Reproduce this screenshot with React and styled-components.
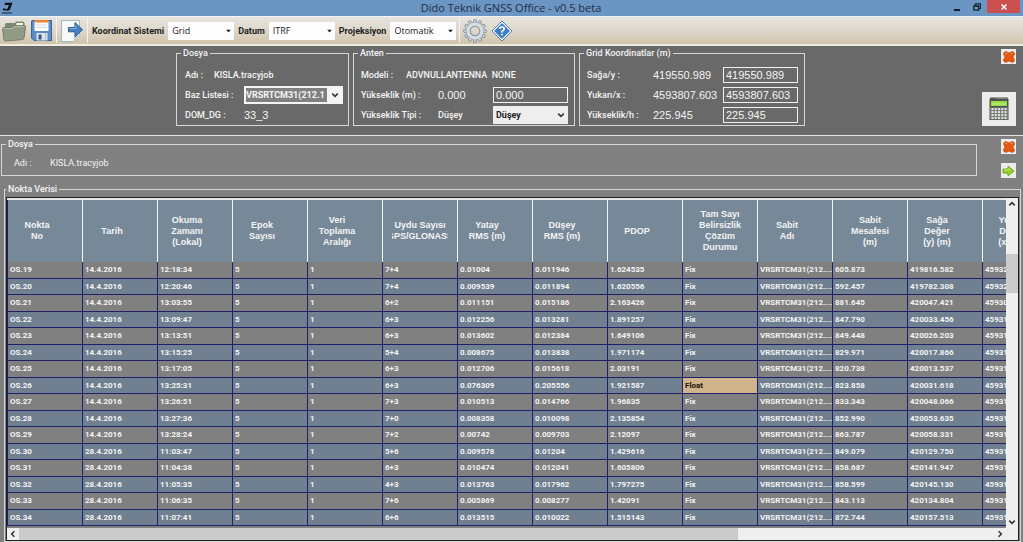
import React from "react";
import styled, { createGlobalStyle } from "styled-components";

const GlobalStyle = createGlobalStyle`
  *, *::before, *::after { box-sizing: border-box; }
  body { margin: 0; font-family: Roboto, "Liberation Sans", sans-serif; font-size: 9px; font-weight: 500; color: #f4f4f4; background: #808080; }
  button, input, select { font: inherit; color: inherit; margin: 0; padding: 0; border-radius: 0; }
  svg { display: block; }
`;

const Window = styled.div`
  display: flex;
  flex-direction: column;
  height: 100vh;
  min-height: 320px;
  overflow: hidden;
`;

const TitleBar = styled.header`
  flex: none;
  display: grid;
  grid-template-columns: 1fr auto 1fr;
  align-items: center;
  height: 16px;
  padding: 0 3px 0 2px;
  background: #6b95c3;
`;

const Title = styled.h1`
  margin: 0;
  font: 400 11px/16px "Open Sans", "Noto Sans", sans-serif;
  color: #1d2f47;
`;

const WindowButtons = styled.div`
  display: flex;
  justify-content: flex-end;
  align-items: flex-start;
  height: 16px;
`;

const WindowButton = styled.button`
  display: grid;
  place-items: center;
  width: ${(p) => (p.$close ? 33 : 20)}px;
  height: 13px;
  border: 0;
  background: ${(p) => (p.$close ? "#c9504f" : "transparent")};
`;

const Toolbar = styled.div`
  flex: none;
  display: flex;
  align-items: center;
  height: 30px;
  padding: 0 2px;
  gap: 3px;
  border-top: 1px solid #f0f4f6;
  border-bottom: 2px solid #efece4;
  background: linear-gradient(#e7e4de, #e0dacf 40%, #d1c4ac);
  color: #222;
`;

const ToolButton = styled.button`
  display: grid;
  place-items: center;
  width: 24px;
  height: 24px;
  border: 0;
  background: transparent;
`;

const Separator = styled.span`
  width: 1px;
  height: 25px;
  background: #f6f3ee;
`;

const ToolLabel = styled.label`
  display: flex;
  align-items: center;
  gap: 4px;
  margin-left: 1px;
  font-weight: 700;
  white-space: nowrap;
`;

const Combo = styled.span`
  position: relative;
  display: block;
  width: ${(p) => p.$width}px;
  color: #222;
  & > svg { position: absolute; right: ${(p) => p.$inset || 3}px; top: 50%; transform: translateY(-50%); pointer-events: none; }
`;

const ToolSelect = styled.select`
  appearance: none;
  display: block;
  width: 100%;
  height: 18px;
  padding-left: 4px;
  border: 0;
  background: #fdfdfd;
  font: 400 9px/18px "Open Sans", sans-serif;
`;

const FormSelect = styled.select`
  appearance: none;
  display: block;
  width: 100%;
  height: 18px;
  padding-left: 3px;
  border: 0;
  background: #eeeeee;
  font-weight: 700;
`;

const HighlightSelect = styled(FormSelect)`
  padding: 0;
  border: 2px solid #f4f4f4;
  border-right-width: 16px;
  background: #808080;
  color: #f4f4f4;
`;

const Panel = styled.section`
  flex: none;
  display: flex;
  background: ${(p) => (p.$dark ? "#696969" : "#808080")};
  height: ${(p) => p.$height}px;
  border-bottom: ${(p) => (p.$dark ? "1px solid #e4e4e4" : "0")};
`;

const Groups = styled.div`
  flex: 1;
  display: flex;
  justify-content: center;
  align-items: flex-start;
  gap: 4px;
  padding: ${(p) => p.$pad};
`;

const Group = styled.fieldset`
  min-width: 0;
  margin: 0;
  padding: 0 4px;
  border: 1px solid #d6d6d6;
  ${(p) => (p.$width ? `width: ${p.$width}px;` : "flex: 1;")}
`;

const GroupBody = styled.div`
  padding: ${(p) => p.$pad || "7px 2px 1px 3px"};
  font-weight: ${(p) => (p.$light ? 400 : 500)};
`;

const Legend = styled.legend`
  padding: 0 2px;
  line-height: 12px;
`;

const Line = styled.div`
  display: flex;
  align-items: center;
  height: 18px;
  margin-bottom: ${(p) => (p.$last ? 0 : 2)}px;
  white-space: pre;
`;

const Caption = styled.label`
  flex: none;
  width: ${(p) => p.$width}px;
`;

const Value = styled.output`
  flex: 1;
  ${(p) => p.$number && 'font: 400 11px/18px "Liberation Sans", sans-serif;'}
`;

const TextBox = styled.input`
  width: 75px;
  height: 16px;
  padding: 0 2px;
  border: 1px solid #f0f0f0;
  outline: 0;
  background: transparent;
  font: 400 11px/14px "Liberation Sans", sans-serif;
`;

const SideButtons = styled.div`
  flex: none;
  display: flex;
  flex-direction: column;
  align-items: flex-end;
  justify-content: space-between;
  width: 42px;
  padding: ${(p) => p.$pad};
`;

const SideButton = styled.button`
  display: grid;
  place-items: center;
  width: ${(p) => p.$size}px;
  height: ${(p) => p.$size}px;
  border: 0;
  background: #ececec;
`;

const DataGroup = styled.fieldset`
  flex: 1;
  display: flex;
  min-width: 0;
  min-height: 0;
  margin: 0 2px 0 4px;
  padding: 2px 1px 0;
  border: 1px solid #d6d6d6;
`;

const GridFrame = styled.div`
  flex: 1;
  display: grid;
  grid-template-columns: minmax(0, 1fr) 12px;
  grid-template-rows: minmax(0, 1fr) 12px;
  min-width: 0;
  min-height: 0;
  border: 1px solid #222;
  background: #efefef;
`;

const Viewport = styled.div`
  overflow: hidden;
  border-top: 2px solid #e4e8ec;
  background: #808080;
`;

const DataTable = styled.table`
  width: 1051px;
  table-layout: fixed;
  border-spacing: 0;
  border-left: 1px solid #1c1c60;
  font: 700 8px/12px Roboto, "Liberation Sans", sans-serif;
`;

const HeadCell = styled.th`
  height: 62px;
  padding: ${(p) => (p.$wide ? "0 9px" : "0 16px 0 0")};
  border-right: 1px solid #f2f2f2;
  background: #778899;
  font: 700 9px/11px "Liberation Sans", sans-serif;
  white-space: pre;
  vertical-align: middle;
`;

const HeadText = styled.span`
  display: flex;
  justify-content: center;
  overflow: hidden;
`;

const Row = styled.tr`
  height: 17px;
  background: #808080;
  &:nth-child(even) { height: 16px; background: #708090; }
`;

const Cell = styled.td`
  overflow: hidden;
  padding: 0 0 0 2px;
  border-right: 1px solid #1f1f6b;
  border-bottom: 1px solid #1f1f6b;
  white-space: nowrap;
  ${(p) => p.$float && "background: #d2b48c; color: #1a1008;"}
`;

const ScrollBar = styled.div`
  display: flex;
  flex-direction: ${(p) => (p.$vertical ? "column" : "row")};
  min-width: 0;
  min-height: 0;
  ${(p) => !p.$vertical && "grid-column: 1 / 3;"}
`;

const ScrollButton = styled.button`
  flex: none;
  display: grid;
  place-items: center;
  width: 12px;
  height: 12px;
  border: 0;
  background: #efefef;
`;

const Track = styled.div`
  flex: 1;
  display: flex;
  flex-direction: inherit;
`;

const Space = styled.span`
  flex: ${(p) => p.$grow};
`;

const Thumb = styled.span`
  flex: ${(p) => p.$grow};
  background: #cbcbcb;
`;

const Chevron = ({ turn = 0, color = "#333", size = 8 }) => (
  <svg width={size} height={size} viewBox="0 0 8 8">
    <path d="M1.2 2.6 4 5.4 6.8 2.6" fill="none" stroke={color} strokeWidth="1.5" transform={`rotate(${turn} 4 4)`} />
  </svg>
);

const Triangle = () => (
  <svg width="5" height="3" viewBox="0 0 5 3"><path d="M0 0h5L2.5 3z" fill="#222" /></svg>
);

const AppLogo = () => (
  <svg width="12" height="12" viewBox="0 0 12 12">
    <path d="M3 .8h7.5L8 7.6Q7 9 5 8.6L1 8.2V6l3 1.2 1.6-.6L7 3H2.5z" fill="#0d1118" />
    <path d="M0 10.5h10v1H0z" fill="#18222f" />
  </svg>
);

const FolderIcon = () => (
  <svg width="24" height="22" viewBox="0 0 24 22">
    <path d="M2 18 3 4.5Q3 3 4.5 3H13l1-1.5h7.5l1 1.5v13z" fill="#7d8873" />
    <path d="M14.5 3H21v3h-7z" fill="#f3f3ec" />
    <path d="M0.6 9Q.5 7.5 2 7.500h7l3-2h10.500Q24 5.500 23.700 7L22 18q-.3 1.500-2 1.700L3.500 21Q2 21 1.800 19.500z" fill="#909b84" stroke="#69745f" strokeWidth=".8" />
    <path d="M1.500 8.600h8l3-2h10" stroke="#b6bea9" fill="none" />
  </svg>
);

const SaveIcon = () => (
  <svg width="21" height="21" viewBox="0 0 21 21">
    <path d="M1 .5h19.500v20H3L.5 18V1z" fill="#5b8bc4" stroke="#36649c" />
    <path d="M3.500 1h14v10h-14z" fill="#fbfbfb" />
    <path d="M3.500 0h14v2.500h-14z" fill="#ed8434" />
    <path d="M5 5h11M5 7.500h11" stroke="#d5d9df" />
    <path d="M5.500 13h11v7.500h-11z" fill="#dce4ec" />
    <path d="M7.500 14.500h3v5h-3z" fill="#35587f" />
    <path d="M14.500 13.500v6" stroke="#aebdca" />
  </svg>
);

const ExportIcon = () => (
  <svg width="24" height="24" viewBox="0 0 24 24">
    <path d="M1.500 1.500h18v14l-6 7h-12z" fill="#f8f9fb" stroke="#aab4bf" />
    <path d="m13.500 22.500.5-6 5.500-1z" fill="#cbd1d8" />
    <path d="M8.500 8.500h6.500v-5l7.500 7.300-7.500 7v-5H8.500z" fill="#447fbd" stroke="#295c95" />
    <path d="M9.500 9.500h6.500v-3" stroke="#8db7df" fill="none" />
  </svg>
);

const GearIcon = () => (
  <svg width="24" height="24" viewBox="-12 -12 24 24">
    {Array.from({ length: 12 }, (_, i) => (
      <path key={i} d="M-1.700-8-1.200-11.300h2.400L1.700-8z" fill="#d4dde2" stroke="#78878f" strokeWidth=".8" transform={`rotate(${i * 30})`} />
    ))}
    <circle r="7" fill="none" stroke="#8997a0" strokeWidth="4.600" />
    <circle r="7" fill="none" stroke="#d4dde2" strokeWidth="3.400" />
    <circle r="4.600" fill="none" stroke="#8d9ba4" />
  </svg>
);

const HelpIcon = () => (
  <svg width="22" height="22" viewBox="0 0 22 22">
    <path d="M11 1 21 11 11 21 1 11z" fill="#fff" stroke="#4d7fb8" strokeWidth="1" strokeLinejoin="round" />
    <path d="M11 3 19 11 11 19 3 11z" fill="#3f7fc4" />
    <path d="M8.800 9Q8.800 7 11 7t2.200 1.800Q13.200 10 11 11.200V12.500M11 13.800v1.500" fill="none" stroke="#fff" strokeWidth="1.700" />
  </svg>
);

const CrossIcon = () => (
  <svg width="12" height="12" viewBox="0 0 12 12">
    <path d="M1 1.500Q2.500-.3 4.500 1.200L6 2 7.500 1.200Q9.500-.3 11 1.500T10.700 4.500L10 6l.7 1.500Q12 9 11 10.500T7.500 10.800L6 10l-1.500.8Q2.500 12 1 10.500T1.300 7.500L2 6 1.300 4.500Q0 3 1 1.500z" fill="#e4590f" stroke="#b8420b" strokeWidth=".7" />
    <path d="M2 2.500Q3 1.500 4.300 2.500M7.500 2.500Q9 1.500 10 2.500" fill="none" stroke="#fa9a52" />
  </svg>
);

const NextIcon = () => (
  <svg width="13" height="12" viewBox="0 0 13 12">
    <path d="M1 4h5V1l6 5-6 5V8H1z" fill="#96cf2b" stroke="#6ba316" strokeWidth=".9" strokeLinejoin="round" />
    <path d="M2 5h5V3.500" fill="none" stroke="#cdec7c" />
  </svg>
);

const CalculatorIcon = () => (
  <svg width="22" height="24" viewBox="0 0 22 24">
    <path d="M2.500.5h17l1 2V23h-19V2.500z" fill="#50534e" />
    <path d="M8 1.500h11" stroke="#7e827b" />
    <path d="M3 4h16v5H3z" fill="#96dc49" />
    <path d="M4 7h14" stroke="#c5f28e" />
    <path d="M2 10.500h18V22.500H2z" fill="#7c807b" />
    {[12, 15, 18, 21].map((y) => (
      <path key={y} d={`M3.500 ${y}h15`} stroke="#e1e4df" strokeWidth="1.800" strokeDasharray="2 1.250" />
    ))}
  </svg>
);

const headers = [
  ["Nokta", "No"], ["Tarih"], ["Okuma", "Zamanı", "(Lokal)"], ["Epok", "Sayısı"], ["Veri", "Toplama", "Aralığı"],
  ["Uydu Sayısı", "GPS/GLONASS"], ["Yatay", "RMS (m)"], ["Düşey", "RMS (m)"], ["PDOP"],
  ["Tam Sayı", "Belirsizlik", "Çözüm", "Durumu"], ["Sabit", "Adı"], ["Sabit", "Mesafesi", "(m)"],
  ["Sağa", "Değer", "(y) (m)"], ["Yukarı", "Değer", "(x) (m)"],
];
const wideColumns = [5, 9, 11];

const rows = `OS.19 14.4.2016 12:18:34 7+4 0.01004 0.011946 1.624535 Fix 605.873 419816.582 459327
OS.20 14.4.2016 12:20:46 7+4 0.009539 0.011894 1.620556 Fix 592.457 419782.308 459327
OS.21 14.4.2016 13:03:55 6+2 0.011151 0.015186 2.163426 Fix 881.645 420047.421 459307
OS.22 14.4.2016 13:09:47 6+3 0.012256 0.013281 1.891257 Fix 847.790 420033.456 459317
OS.23 14.4.2016 13:13:51 6+3 0.013602 0.012384 1.649106 Fix 849.448 420026.203 459317
OS.24 14.4.2016 13:15:25 5+4 0.008675 0.013838 1.971174 Fix 829.971 420017.866 459317
OS.25 14.4.2016 13:17:05 6+3 0.012706 0.015618 2.03191 Fix 820.738 420013.537 459317
OS.26 14.4.2016 13:25:31 6+3 0.076309 0.205556 1.921587 Float 823.858 420031.618 459317
OS.27 14.4.2016 13:26:51 7+3 0.010513 0.014766 1.96835 Fix 833.343 420048.066 459317
OS.28 14.4.2016 13:27:36 7+0 0.008358 0.010098 2.135854 Fix 852.990 420053.635 459317
OS.29 14.4.2016 13:28:24 7+2 0.00742 0.009703 2.12097 Fix 863.787 420058.331 459317
OS.30 28.4.2016 11:03:47 5+6 0.009578 0.01204 1.429616 Fix 849.079 420129.750 459317
OS.31 28.4.2016 11:04:38 6+3 0.010474 0.012041 1.605806 Fix 858.687 420141.947 459317
OS.32 28.4.2016 11:05:35 4+3 0.013763 0.017962 1.797275 Fix 858.599 420145.130 459317
OS.33 28.4.2016 11:06:35 7+6 0.005869 0.008277 1.42091 Fix 843.113 420134.804 459317
OS.34 28.4.2016 11:07:41 6+6 0.013515 0.010022 1.515143 Fix 872.744 420157.513 459317`
  .split("\n")
  .map((line) => {
    const [id, date, time, sats, h, v, pdop, state, dist, y, x] = line.split(" ");
    return [id, date, time, "5", "1", sats, h, v, pdop, state, "VRSRTCM31(212....", dist, y, x];
  });

const coordinates = [
  ["Sağa/y :", "419550.989"],
  ["Yukarı/x :", "4593807.603"],
  ["Yükseklik/h :", "225.945"],
];

const ToolCombo = ({ label, value }) => (
  <ToolLabel>
    {label}
    <Combo $width={66}>
      <ToolSelect defaultValue={value}><option>{value}</option></ToolSelect>
      <Triangle />
    </Combo>
  </ToolLabel>
);

export default function App() {
  return (
    <Window>
      <GlobalStyle />
      <TitleBar>
        <AppLogo />
        <Title>Dido Teknik GNSS Office - v0.5 beta</Title>
        <WindowButtons>
          <WindowButton aria-label="Küçült">
            <svg width="6" height="8" viewBox="0 0 6 8"><path d="M0 6h6v2H0z" fill="#16222f" /></svg>
          </WindowButton>
          <WindowButton aria-label="Önceki boyut">
            <svg width="8" height="8" viewBox="0 0 8 8"><path d="M2.500 2V.8h5v4.700H6M.8 2.800h4.900v4.400H.8zM.8 3.500h5" fill="none" stroke="#16222f" strokeWidth="1.200" /></svg>
          </WindowButton>
          <WindowButton $close aria-label="Kapat">
            <svg width="6" height="6" viewBox="0 0 6 6"><path d="m.5.5 5 5m0-5-5 5" stroke="#fff" strokeWidth="1.500" /></svg>
          </WindowButton>
        </WindowButtons>
      </TitleBar>

      <Toolbar>
        <ToolButton aria-label="Aç"><FolderIcon /></ToolButton>
        <ToolButton aria-label="Kaydet"><SaveIcon /></ToolButton>
        <Separator />
        <ToolButton aria-label="Dışa aktar"><ExportIcon /></ToolButton>
        <Separator />
        <ToolCombo label="Koordinat Sistemi" value="Grid" />
        <ToolCombo label="Datum" value="ITRF" />
        <ToolCombo label="Projeksiyon" value="Otomatik" />
        <Separator />
        <ToolButton aria-label="Ayarlar"><GearIcon /></ToolButton>
        <ToolButton aria-label="Yardım"><HelpIcon /></ToolButton>
      </Toolbar>

      <Panel $dark $height={90}>
        <Groups $pad="1px 0 0">
          <Group $width={173}>
            <Legend>Dosya</Legend>
            <GroupBody $pad="7px 0 1px 4px">
              <Line><Caption as="span" $width={29}>Adı :</Caption><Value>KISLA.tracyjob</Value></Line>
              <Line>
                <Caption htmlFor="base" $width={59}>Baz Listesi :</Caption>
                <Combo $width={99} $inset={4}>
                  <HighlightSelect id="base" defaultValue="VRSRTCM31(212.1"><option>VRSRTCM31(212.1</option></HighlightSelect>
                  <Chevron />
                </Combo>
              </Line>
              <Line $last><Caption as="span" $width={59}>DOM_DG :</Caption><Value $number>33_3</Value></Line>
            </GroupBody>
          </Group>

          <Group $width={222}>
            <Legend>Anten</Legend>
            <GroupBody>
              <Line><Caption as="span" $width={45}>Modeli :</Caption><Value>ADVNULLANTENNA  NONE</Value></Line>
              <Line>
                <Caption htmlFor="height" $width={77}>Yükseklik (m) :</Caption>
                <Value $number>0.000</Value>
                <TextBox id="height" defaultValue="0.000" />
              </Line>
              <Line $last>
                <Caption htmlFor="heightType" $width={77}>Yükseklik Tipi :</Caption>
                <Value>Düşey</Value>
                <Combo $width={75}>
                  <FormSelect id="heightType" defaultValue="Düşey"><option>Düşey</option></FormSelect>
                  <Chevron />
                </Combo>
              </Line>
            </GroupBody>
          </Group>

          <Group $width={226}>
            <Legend>Grid Koordinatlar (m)</Legend>
            <GroupBody>
              {coordinates.map(([label, value], i) => (
                <Line key={label} $last={i === 2}>
                  <Caption htmlFor={`coord${i}`} $width={66}>{label}</Caption>
                  <Value $number>{value}</Value>
                  <TextBox id={`coord${i}`} defaultValue={value} />
                </Line>
              ))}
            </GroupBody>
          </Group>
        </Groups>
        <SideButtons $pad="3px 7px 9px 0">
          <SideButton $size={15} aria-label="Kapat"><CrossIcon /></SideButton>
          <SideButton $size={34} aria-label="Hesapla"><CalculatorIcon /></SideButton>
        </SideButtons>
      </Panel>

      <Panel $height={47}>
        <Groups $pad="2px 4px 0 1px">
          <Group>
            <Legend>Dosya</Legend>
            <GroupBody $light $pad="4px 8px 3px">
              <Line $last><Caption as="span" $width={36}>Adı :</Caption><Value>KISLA.tracyjob</Value></Line>
            </GroupBody>
          </Group>
        </Groups>
        <SideButtons $pad="3px 7px 5px 0">
          <SideButton $size={15} aria-label="Kapat"><CrossIcon /></SideButton>
          <SideButton $size={15} aria-label="İlerle"><NextIcon /></SideButton>
        </SideButtons>
      </Panel>

      <DataGroup>
        <Legend>Nokta Verisi</Legend>
        <GridFrame>
          <Viewport>
            <DataTable>
              <thead>
                <tr>
                  {headers.map((lines, i) => (
                    <HeadCell key={i} $wide={wideColumns.includes(i)}>
                      {lines.map((line) => <HeadText key={line}>{line}</HeadText>)}
                    </HeadCell>
                  ))}
                </tr>
              </thead>
              <tbody>
                {rows.map((row) => (
                  <Row key={row[0]}>
                    {row.map((cell, i) => <Cell key={i} $float={cell === "Float"}>{cell}</Cell>)}
                  </Row>
                ))}
              </tbody>
            </DataTable>
          </Viewport>
          <ScrollBar $vertical>
            <ScrollButton aria-label="Yukarı"><Chevron turn={180} /></ScrollButton>
            <Track><Space $grow={44} /><Thumb $grow={39} /><Space $grow={223} /></Track>
            <ScrollButton aria-label="Aşağı"><Chevron /></ScrollButton>
          </ScrollBar>
          <ScrollBar>
            <ScrollButton aria-label="Sol"><Chevron turn={90} /></ScrollButton>
            <Track><Thumb $grow={719} /><Space $grow={256} /></Track>
            <ScrollButton aria-label="Sağ"><Chevron turn={270} /></ScrollButton>
            <ScrollButton as="span" />
          </ScrollBar>
        </GridFrame>
      </DataGroup>
    </Window>
  );
}
